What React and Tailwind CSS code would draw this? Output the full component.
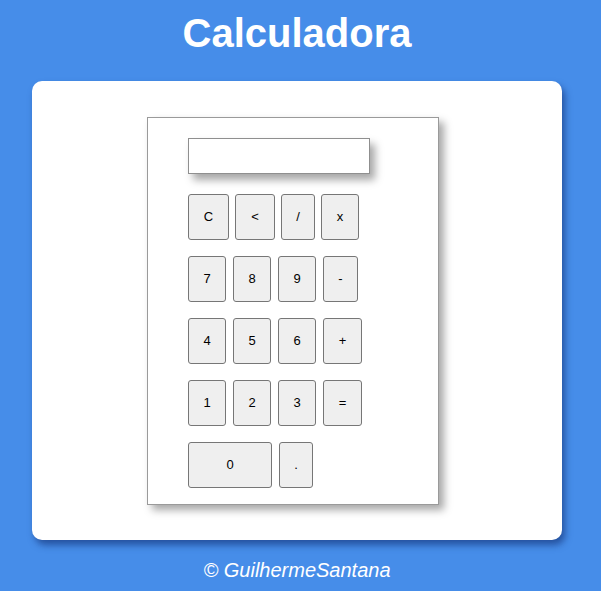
const rows = [
    [
        { label: "C", w: "w-[41px]" },
        { label: "<", w: "w-[40px]" },
        { label: "/", w: "w-[34px]" },
        { label: "x", w: "w-[38px]" },
    ],
    [
        { label: "7", w: "w-[38px]" },
        { label: "8", w: "w-[38px]" },
        { label: "9", w: "w-[38px]" },
        { label: "-", w: "w-[35px]" },
    ],
    [
        { label: "4", w: "w-[38px]" },
        { label: "5", w: "w-[38px]" },
        { label: "6", w: "w-[38px]" },
        { label: "+", w: "w-[39px]" },
    ],
    [
        { label: "1", w: "w-[38px]" },
        { label: "2", w: "w-[38px]" },
        { label: "3", w: "w-[38px]" },
        { label: "=", w: "w-[39px]" },
    ],
    [
        { label: "0", w: "w-[84px]" },
        { label: ".", w: "w-[34px]" },
    ],
];

const Key = ({ label, w }) => (
    <button
        type="button"
        className={`${w} h-[46px] rounded-[3px] border border-[#767676] bg-[#efefef] text-[13px] text-black`}
    >
        {label}
    </button>
);

const App = () => {
    return (
        <div
            className="min-h-screen bg-[#468de9] pt-[10px] pb-6 text-white"
            style={{ fontFamily: '"Liberation Sans", Arial, sans-serif' }}
        >
            <div className="w-[594px]">
                <h1 className="text-center text-[40px] font-bold leading-[46px]">Calculadora</h1>

                <div className="mx-[32px] mt-[25px] h-[459px] w-[530px] rounded-[10px] bg-white pt-[36px] pl-[115px] shadow-[3px_5px_7px_rgba(20,50,120,0.65)]">
                    <div className="h-[388px] w-[292px] border border-[#9a9a9a] bg-white pt-[20px] pl-[40px] shadow-[5px_5px_8px_rgba(0,0,0,0.35)]">
                        <div className="h-[36px] w-[182px] border border-[#8f8f8f] bg-white shadow-[5px_6px_8px_rgba(0,0,0,0.35)]" />

                        <div className="mt-[20px] flex flex-col gap-[16px]">
                            {rows.map((row, i) => (
                                <div key={i} className={`flex ${i === 0 ? "gap-[6px]" : "gap-[7px]"}`}>
                                    {row.map((k) => (
                                        <Key key={k.label} {...k} />
                                    ))}
                                </div>
                            ))}
                        </div>
                    </div>
                </div>

                <p className="mt-[17px] text-center text-[20px] italic leading-[26px]">© GuilhermeSantana</p>
            </div>
        </div>
    );
};

export default App;
